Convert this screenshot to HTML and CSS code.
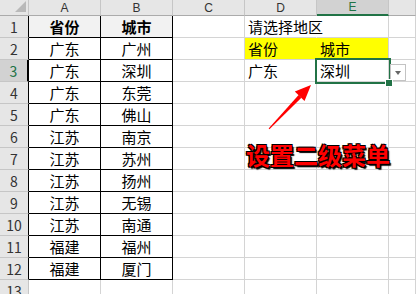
FILE: index.html
```html
<!DOCTYPE html>
<html lang="zh-CN">
<head>
    <meta charset="UTF-8">
    <meta name="viewport" content="width=device-width, initial-scale=1.0">
    <title>设置二级菜单</title>
    <link rel="stylesheet" href="styles.css">
</head>
<body>
    <div class="sheet">
        <!-- 列标题 -->
        <div class="hd corner"><span class="corner-mark"></span></div>
        <div class="hd col">A</div>
        <div class="hd col">B</div>
        <div class="hd col">C</div>
        <div class="hd col">D</div>
        <div class="hd col col-on">E</div>
        <div class="hd col"></div>

        <div class="hd rh edge">1</div>
        <div class="c t title">省份</div>
        <div class="c t title">城市</div>
        <div class="c"></div>
        <div class="c left spill">请选择地区</div>
        <div class="c"></div>
        <div class="c"></div>

        <div class="hd rh edge">2</div>
        <div class="c t">广东</div>
        <div class="c t">广州</div>
        <div class="c"></div>
        <div class="c left yellow join">省份</div>
        <div class="c left yellow">城市</div>
        <div class="c"></div>

        <div class="hd rh edge row-on">3</div>
        <div class="c t">广东</div>
        <div class="c t">深圳</div>
        <div class="c"></div>
        <div class="c left">广东</div>
        <div class="c left active">深圳<span class="drop"></span></div>
        <div class="c"></div>

        <div class="hd rh edge">4</div>
        <div class="c t">广东</div>
        <div class="c t">东莞</div>
        <div class="c"></div><div class="c"></div><div class="c"></div><div class="c"></div>

        <div class="hd rh edge">5</div>
        <div class="c t">广东</div>
        <div class="c t">佛山</div>
        <div class="c"></div><div class="c"></div><div class="c"></div><div class="c"></div>

        <div class="hd rh edge">6</div>
        <div class="c t">江苏</div>
        <div class="c t">南京</div>
        <div class="c"></div><div class="c"></div><div class="c"></div><div class="c"></div>

        <div class="hd rh edge">7</div>
        <div class="c t">江苏</div>
        <div class="c t">苏州</div>
        <div class="c"></div><div class="c"></div><div class="c"></div><div class="c"></div>

        <div class="hd rh edge">8</div>
        <div class="c t">江苏</div>
        <div class="c t">扬州</div>
        <div class="c"></div><div class="c"></div><div class="c"></div><div class="c"></div>

        <div class="hd rh edge">9</div>
        <div class="c t">江苏</div>
        <div class="c t">无锡</div>
        <div class="c"></div><div class="c"></div><div class="c"></div><div class="c"></div>

        <div class="hd rh edge">10</div>
        <div class="c t">江苏</div>
        <div class="c t">南通</div>
        <div class="c"></div><div class="c"></div><div class="c"></div><div class="c"></div>

        <div class="hd rh edge">11</div>
        <div class="c t">福建</div>
        <div class="c t">福州</div>
        <div class="c"></div><div class="c"></div><div class="c"></div><div class="c"></div>

        <div class="hd rh edge">12</div>
        <div class="c t">福建</div>
        <div class="c t">厦门</div>
        <div class="c"></div><div class="c"></div><div class="c"></div><div class="c"></div>

        <div class="hd rh">13</div>
        <div class="c"></div><div class="c"></div><div class="c"></div><div class="c"></div><div class="c"></div><div class="c"></div>
    </div>

    <!-- 标注 -->
    <div class="notes">
        <svg class="arrow" width="416" height="294" viewBox="0 0 416 294">
            <polygon points="268.6,128.4 269.4,129.2 301.4,97.8 298.6,95 " fill="#f00"/>
            <polygon points="311,85 304.5,101 294.8,91.6" fill="#f00"/>
        </svg>
        <span class="callout">设置二级菜单</span>
    </div>
</body>
</html>
```

FILE: styles.css
```css
* {
    margin: 0;
    padding: 0;
    box-sizing: border-box;
}
body {
    font-family: 'Noto Sans CJK SC', sans-serif;
    font-size: 15px;
    color: #000;
    background-color: #fff;
    width: 416px;
    height: 294px;
    overflow: hidden;
    position: relative;
}
.sheet {
    display: grid;
    grid-template-columns: 29px repeat(5, 72px) 27px;
    grid-template-rows: 16px repeat(13, 22px);
}
.c {
    border-right: 1px solid #d4d4d4;
    border-bottom: 1px solid #d4d4d4;
    display: flex;
    align-items: center;
    justify-content: center;
    white-space: nowrap;
    line-height: 1;
}
.c.left {
    justify-content: flex-start;
    padding-left: 3px;
}
.c.spill {
    border-right-color: transparent;
    overflow: visible;
}
.c.t {
    border-right-color: #000;
    border-bottom-color: #000;
}
.c.title {
    background-color: #f2f2f2;
    font-weight: bold;
}
.c.yellow {
    background-color: #ff0;
}
.c.join {
    border-right-color: #ff0;
}
.c.active {
    position: relative;
    outline: 2px solid #217346;
}
.c.active::after {
    content: '';
    position: absolute;
    left: 68px;
    top: 19px;
    width: 6px;
    height: 6px;
    background-color: #217346;
    border: 1px solid #fff;
}
.drop {
    position: absolute;
    left: 73px;
    top: 4px;
    width: 16px;
    height: 17px;
    border: 1px solid #c3c3c3;
    background-color: #fff;
}
.drop::after {
    content: '';
    position: absolute;
    left: 4px;
    top: 6px;
    border-left: 3.5px solid transparent;
    border-right: 3.5px solid transparent;
    border-top: 4px solid #666;
}

/* 行列标题 */
.hd {
    background-color: #e6e6e6;
    color: #333;
    font-size: 14px;
    display: flex;
    align-items: center;
    justify-content: center;
    line-height: 1;
    border-right: 1px solid #c6c6c6;
    border-bottom: 1px solid #c6c6c6;
}
.hd.col {
    font-family: 'Liberation Sans', sans-serif;
    font-size: 12px;
    line-height: 12px;
    border-bottom-color: #ababab;
}
.hd.col-on {
    background-color: #d2d2d2;
    color: #217346;
    border-bottom: 2px solid #217346;
}
.hd.rh.edge {
    border-right-color: #000;
}
.hd.row-on {
    background-color: #d2d2d2;
    color: #217346;
    border-right: 2px solid #217346;
}
.corner {
    position: relative;
    border-bottom-color: #ababab;
}
.corner-mark {
    position: absolute;
    right: 2px;
    bottom: 3px;
    border-left: 11px solid transparent;
    border-bottom: 11px solid #b9b9b9;
}

/* 标注 */
.notes {
    position: absolute;
    left: 0;
    top: 0;
    width: 416px;
    height: 294px;
    pointer-events: none;
}
.arrow {
    position: absolute;
    left: 0;
    top: 0;
}
.callout {
    position: absolute;
    left: 246px;
    top: 141px;
    font-size: 24px;
    font-weight: bold;
    line-height: 1.2;
    color: #f00;
    white-space: nowrap;
    text-shadow: 1px 1px 0 #000, -1px -1px 0 #000, 1px -1px 0 #000, -1px 1px 0 #000, 2px 2px 1px #000;
}
```
